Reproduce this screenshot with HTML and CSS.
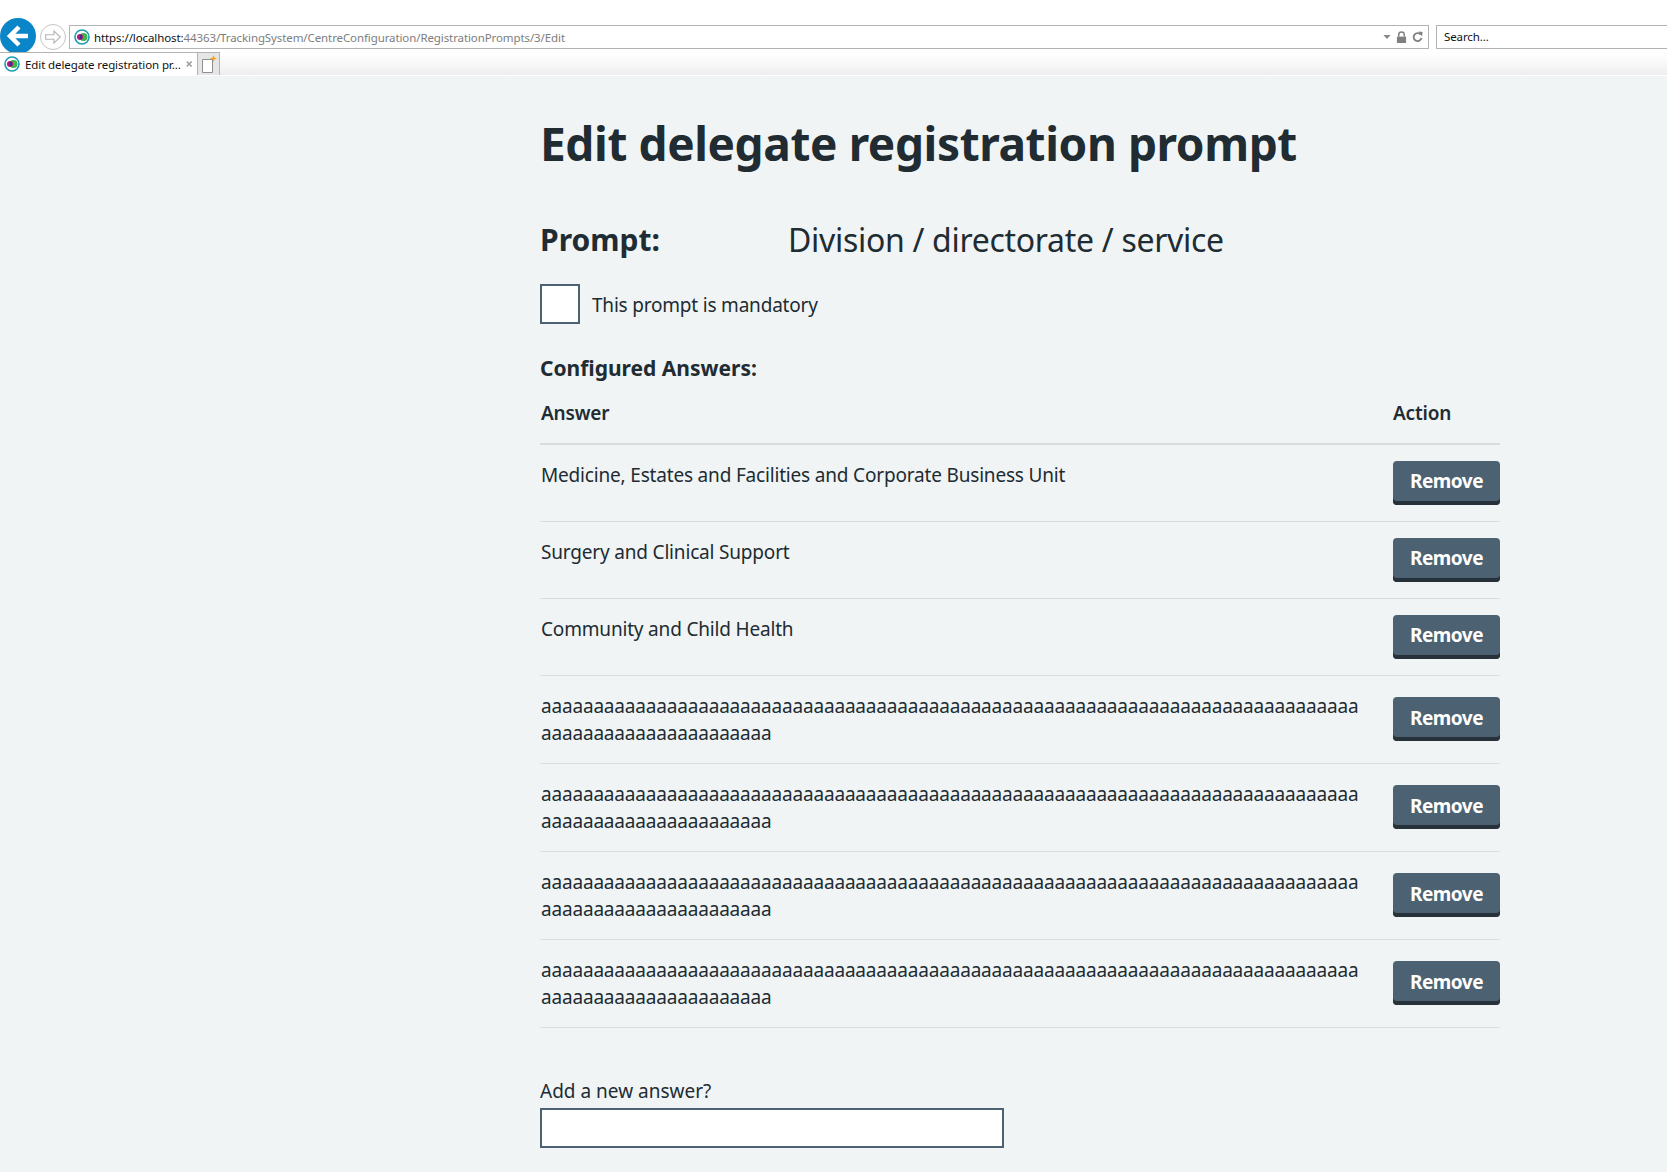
FILE: index.html
```html
<!DOCTYPE html>
<html lang="en">
<head>
    <meta charset="UTF-8">
    <title>Edit delegate registration prompt</title>
    <link rel="stylesheet" href="styles.css">
</head>
<body>
    <header class="browser">
        <div class="nav-row">
            <button class="back-btn" aria-label="Back">
                <svg viewBox="0 0 36 36" width="36" height="36"><path d="M28 18H11M19 9l-9 9 9 9" fill="none" stroke="#fff" stroke-width="4.500"/></svg>
            </button>
            <button class="forward-btn" aria-label="Forward">
                <svg viewBox="0 0 26 26" width="24" height="24"><path d="M5 10.500h9V6.500l7 6.500-7 6.500v-4H5z" fill="none" stroke="#b5b5b5" stroke-width="1.200"/></svg>
            </button>
            <div class="address-bar">
                <svg class="favicon" viewBox="0 0 16 16" width="16" height="16"><circle cx="8" cy="8" r="7" fill="#fff" stroke="#1c9bb5" stroke-width="1.6"/><circle cx="9.5" cy="8" r="4" fill="#3cb54a"/><circle cx="6" cy="8" r="3" fill="#b5157a"/><rect x="6" y="6" width="2" height="4" fill="#3a2f8f"/></svg>
                <span class="url"><span class="url-host">https://localhost:</span>44363/TrackingSystem/CentreConfiguration/RegistrationPrompts/3/Edit</span>
                <span class="address-tools">
                    <svg viewBox="0 0 9 5" width="8" height="4"><path d="M0 0h9L4.500 5z" fill="#888"/></svg>
                    <svg viewBox="0 0 12 14" width="11" height="13"><path d="M3 6V4a3 3 0 0 1 6 0v2" fill="none" stroke="#808080" stroke-width="1.600"/><rect x="1" y="6" width="10" height="7" fill="#808080"/></svg>
                    <svg viewBox="0 0 12 12" width="11" height="12"><path d="M9.500 3.500A4.300 4.300 0 1 0 10.300 7" fill="none" stroke="#808080" stroke-width="2"/><path d="M7 0l4.500 .5-.5 5z" fill="#808080"/></svg>
                </span>
            </div>
            <div class="search-bar">Search...</div>
        </div>
        <div class="tab-row">
            <div class="tab">
                <svg class="favicon" viewBox="0 0 16 16" width="16" height="16"><circle cx="8" cy="8" r="7" fill="#fff" stroke="#1c9bb5" stroke-width="1.6"/><circle cx="9.500" cy="8" r="4" fill="#3cb54a"/><circle cx="6" cy="8" r="3" fill="#b5157a"/><rect x="6" y="6" width="2" height="4" fill="#3a2f8f"/></svg>
                <span class="tab-title">Edit delegate registration pr...</span>
                <svg class="tab-close" viewBox="0 0 9 9" width="10" height="10"><path d="M1 1l7 7M8 1L1 8" stroke="#9a9a9a" stroke-width="2"/></svg>
            </div>
            <div class="new-tab">
                <svg viewBox="0 0 16 18" width="16" height="18"><path d="M1.500 4.500h10v13h-10z" fill="#fff" stroke="#8f8f8f"/><path d="M12.500 0l1 2.500 2.500 1-2.500 1-1 2.500-1-2.500-2.500-1 2.500-1z" fill="#f9a51a"/></svg>
            </div>
        </div>
    </header>

    <main class="page">
        <h1 class="page-title">Edit delegate registration prompt</h1>

        <div class="prompt-row">
            <h2 class="prompt-label">Prompt:</h2>
            <span class="prompt-value">Division / directorate / service</span>
        </div>

        <label class="check-row">
            <span class="check-box"></span>
            <span class="check-text">This prompt is mandatory</span>
        </label>

        <h3 class="answers-title">Configured Answers:</h3>

        <table class="answers">
            <thead>
                <tr>
                    <th class="answer-col">Answer</th>
                    <th class="action-col">Action</th>
                </tr>
            </thead>
            <tbody>
                <tr>
                    <td class="answer-col">Medicine, Estates and Facilities and Corporate Business Unit</td>
                    <td class="action-col"><button class="remove-btn">Remove</button></td>
                </tr>
                <tr>
                    <td class="answer-col">Surgery and Clinical Support</td>
                    <td class="action-col"><button class="remove-btn">Remove</button></td>
                </tr>
                <tr>
                    <td class="answer-col">Community and Child Health</td>
                    <td class="action-col"><button class="remove-btn">Remove</button></td>
                </tr>
                <tr>
                    <td class="answer-col">aaaaaaaaaaaaaaaaaaaaaaaaaaaaaaaaaaaaaaaaaaaaaaaaaaaaaaaaaaaaaaaaaaaaaaaaaaaaaa<br>aaaaaaaaaaaaaaaaaaaaaa</td>
                    <td class="action-col"><button class="remove-btn">Remove</button></td>
                </tr>
                <tr>
                    <td class="answer-col">aaaaaaaaaaaaaaaaaaaaaaaaaaaaaaaaaaaaaaaaaaaaaaaaaaaaaaaaaaaaaaaaaaaaaaaaaaaaaa<br>aaaaaaaaaaaaaaaaaaaaaa</td>
                    <td class="action-col"><button class="remove-btn">Remove</button></td>
                </tr>
                <tr>
                    <td class="answer-col">aaaaaaaaaaaaaaaaaaaaaaaaaaaaaaaaaaaaaaaaaaaaaaaaaaaaaaaaaaaaaaaaaaaaaaaaaaaaaa<br>aaaaaaaaaaaaaaaaaaaaaa</td>
                    <td class="action-col"><button class="remove-btn">Remove</button></td>
                </tr>
                <tr>
                    <td class="answer-col">aaaaaaaaaaaaaaaaaaaaaaaaaaaaaaaaaaaaaaaaaaaaaaaaaaaaaaaaaaaaaaaaaaaaaaaaaaaaaa<br>aaaaaaaaaaaaaaaaaaaaaa</td>
                    <td class="action-col"><button class="remove-btn">Remove</button></td>
                </tr>
            </tbody>
        </table>

        <label class="add-label" for="newAnswer">Add a new answer?</label>
        <input class="add-input" id="newAnswer" type="text">
    </main>
</body>
</html>
```

FILE: styles.css
```css
* {
    margin: 0;
    padding: 0;
    box-sizing: border-box;
}

html, body {
    height: 100%;
    overflow: hidden;
}

body {
    font-family: "Noto Sans", Arial, sans-serif;
    color: #212b32;
    background-color: #f0f4f5;
}

/* browser chrome */
.browser {
    height: 76px;
    background-color: #fff;
    font-family: "Noto Sans", sans-serif;
    font-size: 11.5px;
    letter-spacing: -0.1px;
    color: #111;
}

.nav-row {
    display: flex;
    align-items: center;
    gap: 3px;
    height: 52px;
    padding-top: 20px;
}

.back-btn {
    width: 36px;
    height: 36px;
    flex: none;
    border: none;
    border-radius: 50%;
    background-color: #0a85c7;
}

.forward-btn {
    display: flex;
    align-items: center;
    justify-content: center;
    width: 26px;
    height: 26px;
    flex: none;
    margin: 2px 0 0 1px;
    border: 1px solid #c4c4c4;
    border-radius: 50%;
    background-color: #fff;
}

.address-bar {
    display: flex;
    align-items: center;
    gap: 4px;
    flex: none;
    width: 1360px;
    height: 24px;
    margin-top: 2px;
    padding: 0 4px;
    border: 1px solid #b3b3b3;
}

.favicon {
    flex: none;
}

.url {
    flex: 1;
    color: #7d7d7d;
}

.url-host {
    color: #111;
}

.address-tools {
    display: flex;
    align-items: center;
    gap: 5px;
    margin-right: 1px;
}

.search-bar {
    flex: 1;
    height: 24px;
    margin: 2px 0 0 4px;
    padding: 3px 7px;
    border: 1px solid #b3b3b3;
    border-right: none;
}

.tab-row {
    display: flex;
    height: 24px;
    background: linear-gradient(#fff 10%, #eeeeee);
    border-bottom: 1px solid #fff;
}

.tab {
    display: flex;
    align-items: center;
    gap: 5px;
    width: 197px;
    padding: 0 5px 0 4px;
    background-color: #fff;
    border-top: 1px solid #b3b3b3;
    white-space: nowrap;
}

.tab-title {
    flex: 1;
}

.new-tab {
    display: flex;
    align-items: center;
    justify-content: center;
    width: 23px;
    background-color: #e6e6e6;
    border: 1px solid #b3b3b3;
    border-bottom: none;
}

/* page content */
.page {
    width: 960px;
    margin-left: 540px;
}

.page-title {
    font-size: 46px;
    line-height: 56px;
    font-weight: 700;
    letter-spacing: -0.4px;
    margin-top: 39px;
}

.prompt-row {
    display: flex;
    align-items: center;
    margin-top: 49px;
}

.prompt-label {
    width: 248px;
    font-size: 30px;
    line-height: 40px;
    font-weight: 700;
}

.prompt-value {
    font-size: 32px;
    line-height: 40px;
    letter-spacing: -0.3px;
}

.check-row {
    display: flex;
    align-items: center;
    gap: 12px;
    margin-top: 24px;
    font-size: 19px;
    letter-spacing: -0.2px;
}

.check-text {
    padding-top: 2px;
}

.check-box {
    width: 40px;
    height: 40px;
    border: 2px solid #4c6272;
    background-color: #fff;
}

.answers-title {
    font-size: 21px;
    line-height: 32px;
    font-weight: 700;
    margin-top: 27px;
    padding-top: 1px;
}

.answers {
    width: 100%;
    border-collapse: collapse;
    font-size: 19px;
    line-height: 27.5px;
    letter-spacing: -0.18px;
}

.answers th {
    text-align: left;
    font-weight: 600;
    padding: 16px 0 15px;
    border-bottom: 2px solid #d8dde0;
}

.answers td {
    vertical-align: top;
    padding: 17px 0 15px;
    border-bottom: 1px solid #d8dde0;
}

.answers .answer-col {
    padding-left: 1px;
}

.answers .action-col {
    width: 107px;
    vertical-align: middle;
}

.answers td.action-col {
    padding: 16px 0;
}

.remove-btn {
    display: block;
    width: 107px;
    height: 44px;
    padding-bottom: 3px;
    border: none;
    border-radius: 4px;
    font: 700 19px/28px "Noto Sans", Arial, sans-serif;
    letter-spacing: -0.5px;
    color: #fff;
    background-color: #4c6272;
    box-shadow: inset 0 -4px 0 #263139;
}

.add-label {
    display: block;
    margin-top: 49px;
    font-size: 19px;
    line-height: 28px;
}

.add-input {
    display: block;
    width: 464px;
    height: 40px;
    margin-top: 3px;
    border: 2px solid #4c6272;
    background-color: #fff;
}
```
